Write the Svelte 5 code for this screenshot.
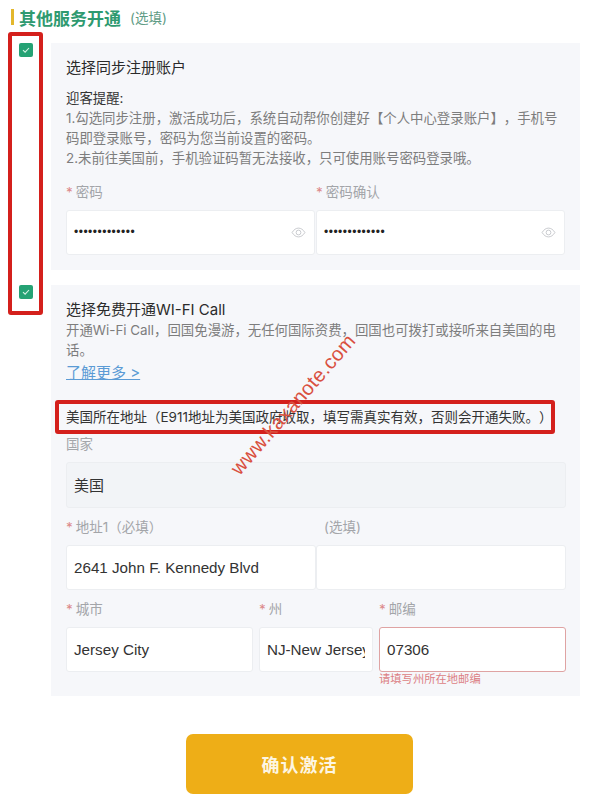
<script>
	const passwordFields = [
		{ label: '密码', value: '•••••••••••••' },
		{ label: '密码确认', value: '•••••••••••••' }
	];
</script>

{#snippet check()}
	<span class="check">
		<svg viewBox="0 0 14 14" width="14" height="14" aria-hidden="true">
			<path d="M4 7.2 6.1 9.2 10 5" fill="none" stroke="#d9f2e6" stroke-width="1.1" />
		</svg>
	</span>
{/snippet}

{#snippet eye()}
	<svg class="eye" viewBox="0 0 16 12" width="15" height="11" aria-hidden="true">
		<path d="M1 6C3 2.8 5.3 1.2 8 1.2S13 2.8 15 6c-2 3.2-4.3 4.8-7 4.8S3 9.2 1 6Z" fill="none" stroke="#c4c6cb" stroke-width="1" />
		<circle cx="8" cy="6" r="2.6" fill="none" stroke="#c4c6cb" stroke-width="1" />
	</svg>
{/snippet}

<main class="page">
	<h2 class="heading">
		<span class="bar"></span>
		<span class="heading-text">其他服务开通</span>
		<span class="optional">(选填)</span>
	</h2>

	<section class="option">
		<div class="check-col">{@render check()}</div>
		<div class="card first-card">
			<h3 class="card-title">选择同步注册账户</h3>
			<p class="notice-title">迎客提醒:</p>
			<p class="notice">1.勾选同步注册，激活成功后，系统自动帮你创建好【个人中心登录账户】，手机号码即登录账号，密码为您当前设置的密码。</p>
			<p class="notice">2.未前往美国前，手机验证码暂无法接收，只可使用账号密码登录哦。</p>
			<div class="row two pw-row">
				{#each passwordFields as field}
					<div class="field">
						<span class="label"><i>*</i>{field.label}</span>
						<div class="input pw">
							<span class="dots">{field.value}</span>
							{@render eye()}
						</div>
					</div>
				{/each}
			</div>
		</div>
	</section>

	<section class="option second">
		<div class="check-col">{@render check()}</div>
		<div class="card second-card">
			<h3 class="card-title wifi">选择免费开通WI-FI Call</h3>
			<p class="notice wifi-text">开通Wi-Fi Call，回国免漫游，无任何国际资费，回国也可拨打或接听来自美国的电话。</p>
			<a class="more" href="#more">了解更多 &gt;</a>
			<p class="address-title">美国所在地址（E911地址为美国政府收取，填写需真实有效，否则会开通失败。）</p>

			<div class="field country">
				<span class="label">国家</span>
				<div class="input disabled">美国</div>
			</div>
			<div class="row two">
				<div class="field">
					<span class="label"><i>*</i>地址1（必填）</span>
					<div class="input">2641 John F. Kennedy Blvd</div>
				</div>
				<div class="field">
					<span class="label no-star">(选填)</span>
					<div class="input"></div>
				</div>
			</div>
			<div class="row three">
				<div class="field">
					<span class="label"><i>*</i>城市</span>
					<div class="input">Jersey City</div>
				</div>
				<div class="field">
					<span class="label"><i>*</i>州</span>
					<div class="input"><span class="clip">NJ-New Jersey</span></div>
				</div>
				<div class="field">
					<span class="label"><i>*</i>邮编</span>
					<div class="input error">07306</div>
					<span class="error-text">请填写州所在地邮编</span>
				</div>
			</div>
		</div>
	</section>

	<button class="submit" type="button">确认激活</button>

	<div class="mark mark-checks"></div>
	<div class="mark mark-address"></div>
	<div class="watermark">www.kaxanote.com</div>
</main>

<style>
	:global(body) {
		margin: 0;
		background: #fff;
	}

	.page {
		position: relative;
		width: 592px;
		height: 800px;
		overflow: hidden;
		box-sizing: border-box;
		padding-top: 5px;
		font-family: 'Inter', 'Noto Sans CJK SC', sans-serif;
		color: #333;
		text-spacing-trim: space-all;
	}

	.heading {
		display: flex;
		align-items: center;
		height: 24px;
		margin: 0 0 14px 11px;
		font-size: 18px;
	}

	.bar {
		width: 3px;
		height: 16px;
		margin-right: 5px;
		background: #e3b72c;
	}

	.heading-text {
		color: #2f9a70;
		font-size: 17px;
		font-weight: 700;
	}

	.optional {
		margin-left: 9px;
		color: #5f9c85;
		font-size: 13.5px;
		font-weight: 400;
	}

	.option {
		display: flex;
	}

	.second {
		margin-top: 15px;
	}

	.check-col {
		width: 51px;
		flex-shrink: 0;
		padding-left: 19px;
		box-sizing: border-box;
	}

	.check {
		display: block;
		width: 14px;
		height: 14px;
		border-radius: 2px;
		background: #25a274;
	}

	.check svg {
		display: block;
	}

	.card {
		width: 529px;
		box-sizing: border-box;
		padding: 15px 14px 15px 15px;
		background: #f6f7fa;
	}

	.second-card {
		padding-bottom: 24px;
	}

	.card-title {
		margin: 0;
		font-size: 15px;
		font-weight: 400;
		line-height: 20px;
		color: #2b2b2b;
	}

	.notice-title {
		margin: 10px 0 0;
		font-size: 13.4px;
		line-height: 20px;
		color: #333;
	}

	.notice {
		margin: 0;
		font-size: 13.4px;
		line-height: 20px;
		color: #7d7d7d;
	}

	.row {
		display: grid;
	}

	.two {
		grid-template-columns: 250px 250px;
	}

	.three {
		grid-template-columns: 187px 114px 187px;
		gap: 6px;
		margin-top: 9px;
	}

	.pw-row {
		margin-top: 14px;
	}

	.field {
		display: flex;
		flex-direction: column;
		position: relative;
	}

	.label {
		height: 20px;
		margin-bottom: 8px;
		font-size: 13.5px;
		line-height: 20px;
		color: #a3a5a9;
	}

	.label i {
		margin-right: 3px;
		font-style: normal;
		color: #dc8a8a;
	}

	.no-star {
		padding-left: 8px;
	}

	.input {
		box-sizing: border-box;
		height: 45px;
		padding: 0 7px;
		border: 1px solid #eceef1;
		border-radius: 3px;
		background: #fff;
		font-family: 'Liberation Sans', 'Noto Sans CJK SC', sans-serif;
		font-size: 15.2px;
		line-height: 43px;
		color: #333;
		white-space: nowrap;
		overflow: hidden;
	}

	.pw {
		display: flex;
		align-items: center;
		justify-content: space-between;
		padding-right: 8px;
		margin-right: 1px;
	}

	.dots {
		font-size: 12px;
		letter-spacing: 0.5px;
		color: #222;
	}

	.eye {
		flex-shrink: 0;
	}

	.wifi {
		line-height: 18px;
		margin-top: 1px;
	}

	.wifi-text {
		margin-top: 1px;
	}

	.more {
		display: inline-block;
		margin-top: 2px;
		font-size: 15px;
		line-height: 22px;
		color: #5b9bd5;
	}

	.address-title {
		margin: 23px 0 0;
		font-size: 13.5px;
		line-height: 20px;
		color: #333;
	}

	.country {
		margin-top: 7px;
		margin-bottom: 9px;
		width: 500px;
	}

	.disabled {
		height: 46px;
		background: #f2f4f7;
		font-family: 'Noto Sans CJK SC', sans-serif;
		font-size: 15px;
	}

	.clip {
		display: block;
		overflow: hidden;
	}

	.error {
		border-color: #dfa3a3;
	}

	.error-text {
		position: absolute;
		top: 73px;
		left: 0;
		font-size: 11.3px;
		line-height: 14px;
		color: #dc7f84;
	}

	.submit {
		display: block;
		width: 227px;
		height: 60px;
		margin: 38px 0 0 186px;
		padding: 0;
		border: 0;
		border-radius: 7px;
		background: #eeae17;
		font-family: 'Noto Sans CJK SC', sans-serif;
		font-size: 18px;
		font-weight: 700;
		letter-spacing: 1px;
		color: #fdf6e3;
	}

	/* red annotations laid over the form */
	.mark {
		position: absolute;
		box-sizing: border-box;
		border: 4px solid #d4201c;
		border-radius: 3px;
		pointer-events: none;
	}

	.mark-checks {
		left: 8px;
		top: 32px;
		width: 35px;
		height: 283px;
	}

	.mark-address {
		left: 55px;
		top: 400px;
		width: 500px;
		height: 34px;
	}

	.watermark {
		position: absolute;
		left: 203px;
		top: 391px;
		width: 184px;
		font-family: 'Liberation Sans', sans-serif;
		font-size: 20px;
		letter-spacing: 0.4px;
		color: #d9503f;
		transform: rotate(-49deg);
		white-space: nowrap;
		pointer-events: none;
	}
</style>
